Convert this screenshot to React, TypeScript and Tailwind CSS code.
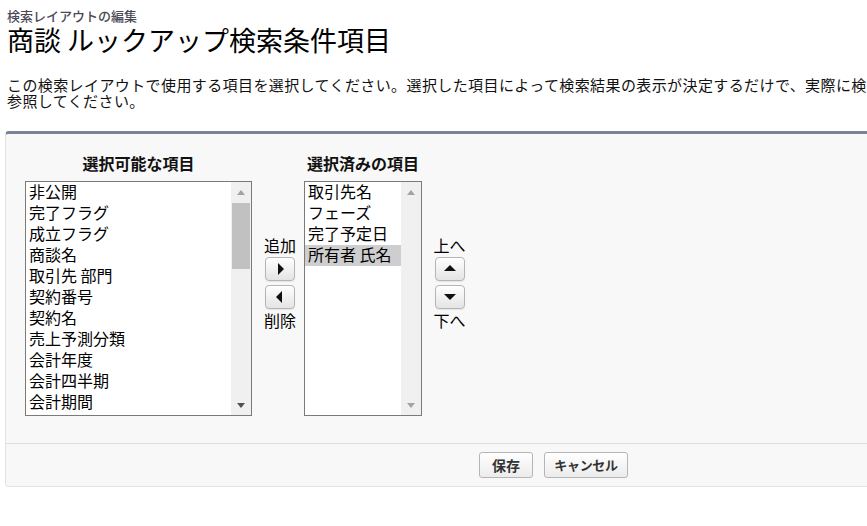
import type { ReactNode } from "react";

const available = [
  "非公開",
  "完了フラグ",
  "成立フラグ",
  "商談名",
  "取引先 部門",
  "契約番号",
  "契約名",
  "売上予測分類",
  "会計年度",
  "会計四半期",
  "会計期間",
];

const selected = ["取引先名", "フェーズ", "完了予定日", "所有者 氏名"];

type Dir = "up" | "down" | "left" | "right";

// small triangles used in scrollbars
function Arrow({ dir }: { dir: Dir }) {
  const points = {
    up: "1,7 5,2 9,7",
    down: "1,3 5,8 9,3",
    left: "7,1 2,5 7,9",
    right: "3,1 8,5 3,9",
  }[dir];
  return (
    <svg width="10" height="10" viewBox="0 0 10 10">
      <polygon points={points} fill="currentColor" />
    </svg>
  );
}

// bigger triangles on the move buttons
function BigArrow({ dir }: { dir: Dir }) {
  const points = {
    up: "1,9 7,3 13,9",
    down: "1,4 7,10 13,4",
    left: "9,1 3,7 9,13",
    right: "5,1 11,7 5,13",
  }[dir];
  return (
    <svg width="14" height="14" viewBox="0 0 14 14">
      <polygon points={points} fill="currentColor" />
    </svg>
  );
}

function ArrowButton({ dir }: { dir: Dir }) {
  return (
    <div className="w-[30px] h-[24px] flex items-center justify-center rounded-[4px] border border-[#b5b5b5] bg-linear-to-b from-white to-[#e4e4e4] text-[#111] shadow-[0_1px_1px_rgba(0,0,0,0.08)]">
      <BigArrow dir={dir} />
    </div>
  );
}

function ListBox({
  items,
  width,
  active,
  thumb,
}: {
  items: string[];
  width: string;
  active?: number;
  thumb?: boolean;
}) {
  return (
    <div className={`${width} h-[235px] flex border border-[#7a7a7a] bg-white`}>
      <div className="flex-1 flex flex-col overflow-hidden">
        {items.map((it, i) => (
          <div
            key={it}
            className={`h-[21px] leading-[19px] pl-[3px] text-[16px] whitespace-nowrap ${
              i === active ? "bg-[#cecece]" : ""
            }`}
          >
            {it}
          </div>
        ))}
      </div>
      <div className="w-[20px] flex flex-col bg-[#f0f0f0]">
        <div className="h-[21px] flex items-center justify-center text-[#a3a3a3]">
          <Arrow dir="up" />
        </div>
        {thumb ? <div className="mx-[1px] h-[66px] bg-[#c1c1c1]" /> : null}
        <div className="flex-1" />
        <div
          className={`h-[21px] flex items-center justify-center ${
            thumb ? "text-[#505050]" : "text-[#a3a3a3]"
          }`}
        >
          <Arrow dir="down" />
        </div>
      </div>
    </div>
  );
}

function Column({ label, children }: { label: string; children: ReactNode }) {
  return (
    <div className="flex flex-col items-center">
      <div className="h-[20px] leading-[20px] text-[16px] font-bold text-[#111] whitespace-nowrap">{label}</div>
      <div className="mt-[8px]">{children}</div>
    </div>
  );
}

function Mover({ top, bottom, first, second }: { top: string; bottom: string; first: Dir; second: Dir }) {
  return (
    <div className="mt-[83px] flex flex-col items-center">
      <div className="h-[18px] leading-[18px] text-[16px] whitespace-nowrap">{top}</div>
      <div className="mt-[3px]">
        <ArrowButton dir={first} />
      </div>
      <div className="mt-[4px]">
        <ArrowButton dir={second} />
      </div>
      <div className="mt-[2px] h-[18px] leading-[18px] text-[16px] whitespace-nowrap">{bottom}</div>
    </div>
  );
}

export default function App() {
  return (
    <div className="w-[867px] h-[526px] overflow-hidden bg-white text-black font-['Noto_Sans_CJK_JP','Noto_Sans',sans-serif]">
      <div className="w-[1110px] pt-[8px] pl-[5px]">
        <div className="pl-[2px]">
          <div className="text-[13px] leading-[16px] font-medium text-[#4a4a56]">検索レイアウトの編集</div>
          <h1 className="text-[27px] leading-[32px] text-black">商談 ルックアップ検索条件項目</h1>
          <p className="mt-[21px] text-[15px] leading-[16px] tracking-[0.4px] text-[#111]">
            <span className="whitespace-nowrap">
              この検索レイアウトで使用する項目を選択してください。選択した項目によって検索結果の表示が決定するだけで、実際に検索される項目が決まるわけではありません。詳細は、ヘルプを
            </span>
            <br />
            参照してください。
          </p>
        </div>

        <div className="mt-[22px] w-[1097px] rounded-[4px] border border-t-[3px] border-[#e3e3e3] border-t-[#7b8396] bg-[#f8f8f8]">
          <div className="flex items-start pl-[19px] pt-[19px] pb-[27px]">
            <Column label="選択可能な項目">
              <ListBox items={available} width="w-[227px]" thumb />
            </Column>
            <div className="ml-[11px] w-[34px]">
              <Mover top="追加" bottom="削除" first="right" second="left" />
            </div>
            <div className="ml-[7px]">
              <Column label="選択済みの項目">
                <ListBox items={selected} width="w-[118px]" active={3} />
              </Column>
            </div>
            <div className="ml-[12px] w-[31px]">
              <Mover top="上へ" bottom="下へ" first="up" second="down" />
            </div>
          </div>
          <div className="border-t border-[#dedede] pt-[8px] pb-[8px] flex justify-center gap-[11px]">
            <div className="w-[54px] h-[26px] flex items-center justify-center rounded-[3px] border border-[#b5b5b5] bg-linear-to-b from-white to-[#ececec] text-[14px] font-bold text-[#333]">
              保存
            </div>
            <div className="w-[84px] h-[26px] flex items-center justify-center rounded-[3px] border border-[#b5b5b5] bg-linear-to-b from-white to-[#ececec] text-[13px] font-bold text-[#333] tracking-[-0.3px]">
              キャンセル
            </div>
          </div>
        </div>
      </div>
    </div>
  );
}
